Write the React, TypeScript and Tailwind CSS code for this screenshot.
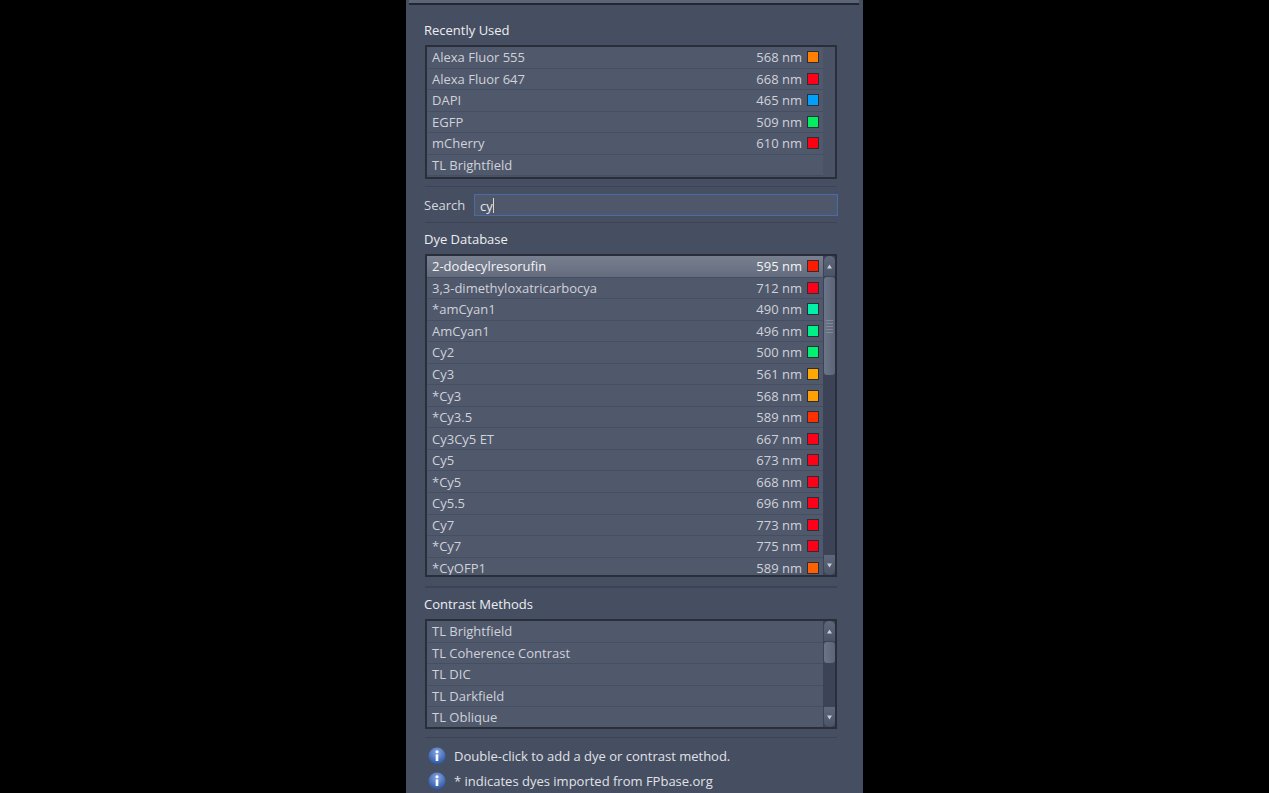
import React from 'react';

type Dye = { name: string; nm?: string; color?: string };

const recent: Dye[] = [
  { name: 'Alexa Fluor 555', nm: '568 nm', color: '#ff8000' },
  { name: 'Alexa Fluor 647', nm: '668 nm', color: '#ff0018' },
  { name: 'DAPI', nm: '465 nm', color: '#00a0ff' },
  { name: 'EGFP', nm: '509 nm', color: '#00f060' },
  { name: 'mCherry', nm: '610 nm', color: '#ff0010' },
  { name: 'TL Brightfield' },
];

const dyes: Dye[] = [
  { name: '2-dodecylresorufin', nm: '595 nm', color: '#ff1a00' },
  { name: '3,3-dimethyloxatricarbocya', nm: '712 nm', color: '#ff0018' },
  { name: '*amCyan1', nm: '490 nm', color: '#00f0a8' },
  { name: 'AmCyan1', nm: '496 nm', color: '#00f088' },
  { name: 'Cy2', nm: '500 nm', color: '#00f070' },
  { name: 'Cy3', nm: '561 nm', color: '#ffa800' },
  { name: '*Cy3', nm: '568 nm', color: '#ffa000' },
  { name: '*Cy3.5', nm: '589 nm', color: '#ff3000' },
  { name: 'Cy3Cy5 ET', nm: '667 nm', color: '#ff0018' },
  { name: 'Cy5', nm: '673 nm', color: '#ff0018' },
  { name: '*Cy5', nm: '668 nm', color: '#ff0018' },
  { name: 'Cy5.5', nm: '696 nm', color: '#ff0018' },
  { name: 'Cy7', nm: '773 nm', color: '#ff0018' },
  { name: '*Cy7', nm: '775 nm', color: '#ff0018' },
  { name: '*CyOFP1', nm: '589 nm', color: '#ff6000' },
];

const contrast: Dye[] = [
  { name: 'TL Brightfield' },
  { name: 'TL Coherence Contrast' },
  { name: 'TL DIC' },
  { name: 'TL Darkfield' },
  { name: 'TL Oblique' },
];

function Row({ dye, selected }: { dye: Dye; selected?: boolean }) {
  return (
    <div
      className={`flex h-[21.55px] shrink-0 items-center border-b border-[#464e61] pl-[5px] pr-[4px] text-[13px] leading-[16px] ${
        selected ? 'bg-gradient-to-b from-[#78808f] to-[#636b7e] text-[#f2f3f5]' : 'bg-[#50586c] text-[#cfd2d9]'
      }`}
    >
      <span className="flex-1 whitespace-nowrap">{dye.name}</span>
      {dye.nm && <span className="whitespace-nowrap">{dye.nm}</span>}
      {dye.color && (
        <span className="ml-[5px] h-[12px] w-[12px] border border-[#2a2e38]" style={{ backgroundColor: dye.color }} />
      )}
    </div>
  );
}

function ArrowButton({ up }: { up?: boolean }) {
  return (
    <div className={`flex h-[20px] w-[11px] shrink-0 items-center justify-center bg-gradient-to-b from-[#5f677b] to-[#4b5367] ${up ? 'rounded-t-[5px]' : 'rounded-b-[5px]'}`}>
      <svg width="5" height="5" viewBox="0 0 5 5">
        <path d={up ? 'M2.5 0.5 L5 4.5 L0 4.5 Z' : 'M0 0.5 L5 0.5 L2.5 4.5 Z'} fill="#c8ccd4" />
      </svg>
    </div>
  );
}

function ScrollBar({ thumb, grip }: { thumb: string; grip?: boolean }) {
  return (
    <div className="flex w-[12px] shrink-0 flex-col items-center bg-[#3c4356]">
      <ArrowButton up />
      <div className={`mt-px flex w-[11px] ${thumb} flex-col items-center justify-center gap-[2px] rounded-[3px] bg-gradient-to-r from-[#6c7487] to-[#5c6478]`}>
        {grip && [0, 1, 2, 3, 4].map((i) => <span key={i} className="h-px w-[7px] bg-[#80889a]" />)}
      </div>
      <div className="flex-1" />
      <ArrowButton />
    </div>
  );
}

function ListBox({ items, height, scroll, selectFirst }: { items: Dye[]; height: string; scroll: React.ReactNode; selectFirst?: boolean }) {
  return (
    <div className={`flex ${height} overflow-hidden border-2 border-[#2a2e39] bg-[#4a5266]`}>
      <div className="flex min-w-0 flex-1 flex-col overflow-hidden">
        {items.map((d, i) => (
          <Row key={d.name} dye={d} selected={selectFirst && i === 0} />
        ))}
      </div>
      {scroll}
    </div>
  );
}

function InfoIcon() {
  return (
    <svg width="18" height="18" viewBox="0 0 18 18" className="shrink-0">
      <defs>
        <radialGradient id="infoFill" cx="50%" cy="30%" r="70%">
          <stop offset="0%" stopColor="#86a8e6" />
          <stop offset="100%" stopColor="#2a52a0" />
        </radialGradient>
      </defs>
      <circle cx="9" cy="9" r="8.5" fill="url(#infoFill)" />
      <circle cx="9" cy="4.8" r="1.5" fill="#fff" />
      <path d="M7.7 7.4 H10.3 V14 H7.7 Z" fill="#fff" />
    </svg>
  );
}

export default function App() {
  return (
    <div className="flex h-[793px] w-full justify-center overflow-hidden bg-black font-['Open_Sans','Noto_Sans',sans-serif]">
      <div className="flex h-full w-[457px] flex-col bg-[#464e61] pl-[19px] pr-[26px]">
        <div className="-ml-[16px] -mr-[22px] h-[5px] shrink-0 border-b-2 border-[#23272f] bg-[#5c6478]" />
        <div className="-ml-px mt-[16px] text-[13px] leading-[18px] text-[#eceef1]">Recently Used</div>
        <div className="mt-[6px]">
          <ListBox items={recent} height="h-[134px]" scroll={<div className="w-[12px] shrink-0 bg-[#4a5266]" />} />
        </div>
        <div className="mt-[7px] h-px bg-[#3c4356]" />
        <div className="mt-[7px] flex items-center">
          <span className="-ml-px w-[50px] pt-[2px] text-[13px] text-[#d5d8de]">Search</span>
          <div className="-mr-px flex h-[22px] flex-1 items-center border border-[#4a6aa8] bg-[#4f576b] pl-[5px] pt-px text-[13px] leading-[18px] text-[#e6e8ec]">
            <span>cy</span>
            <span className="h-[15px] w-px bg-[#d8d8c8]" />
          </div>
        </div>
        <div className="mt-[6px] h-px bg-[#3c4356]" />
        <div className="-ml-px mt-[7px] text-[13px] leading-[18px] text-[#eceef1]">Dye Database</div>
        <div className="mt-[6px]">
          <ListBox items={dyes} height="h-[323px]" selectFirst scroll={<ScrollBar thumb="h-[98px]" grip />} />
        </div>
        <div className="mt-[9px] h-[2px] bg-[#3c4356]" />
        <div className="-ml-px mt-[7px] text-[13px] leading-[18px] text-[#eceef1]">Contrast Methods</div>
        <div className="mt-[6px]">
          <ListBox items={contrast} height="h-[110px]" scroll={<ScrollBar thumb="h-[21px]" />} />
        </div>
        <div className="mt-[8px] h-px bg-[#3c4356]" />
        <div className="mt-[9px] flex items-center gap-[8px] pl-[3px] text-[13px] leading-[18px] text-[#e0e2e7]">
          <InfoIcon />
          <span>Double-click to add a dye or contrast method.</span>
        </div>
        <div className="mt-[7px] flex items-center gap-[8px] pl-[3px] text-[13px] leading-[18px] text-[#e0e2e7]">
          <InfoIcon />
          <span>* indicates dyes imported from FPbase.org</span>
        </div>
      </div>
    </div>
  );
}
